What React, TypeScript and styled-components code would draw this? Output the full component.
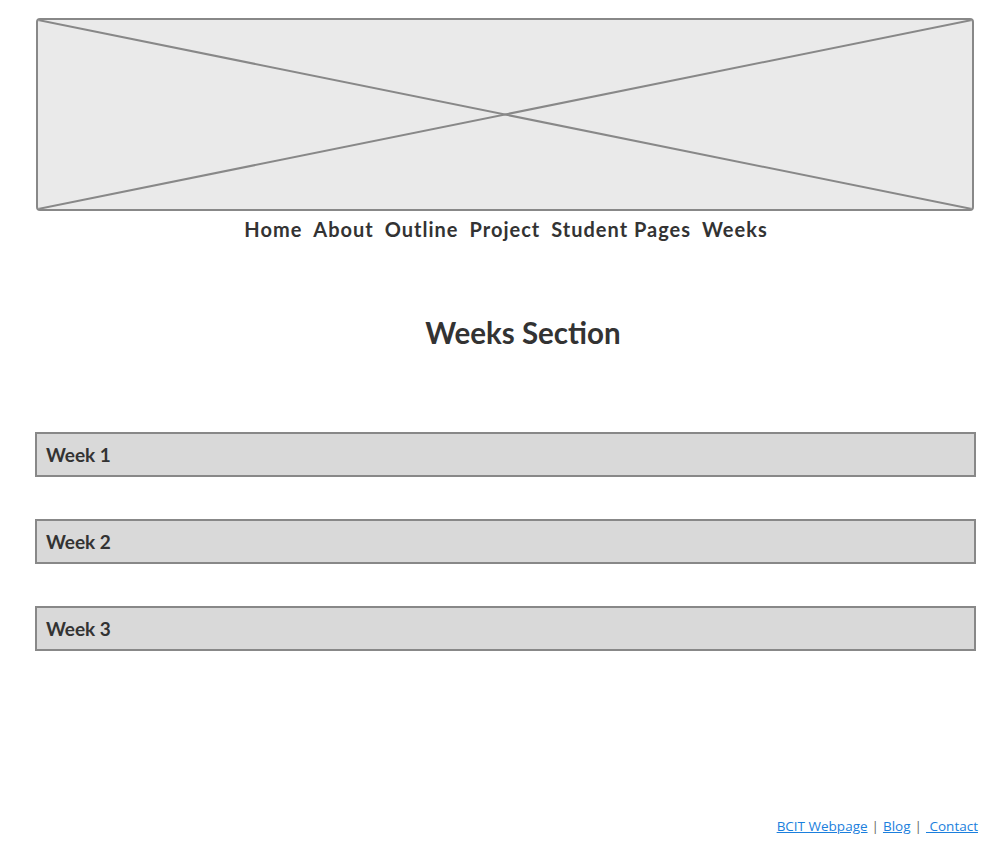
import React from "react";
import styled, { createGlobalStyle } from "styled-components";

const Global = createGlobalStyle`
  html, body { margin: 0; padding: 0; background: #fff; }
  body { font-family: "Lato", "Open Sans", sans-serif; color: #333; }
`;

const Page = styled.div`
  width: 1000px;
  height: 863px;
  display: flex;
  flex-direction: column;
  box-sizing: border-box;
`;

const Banner = styled.div`
  margin: 18px 0 0 36px;
  width: 938px;
  height: 193px;
  box-sizing: border-box;
  border: 2px solid #888;
  border-radius: 4px;
  background: #eaeaea;
  overflow: hidden;
  svg { display: block; width: 100%; height: 100%; }
`;

const Nav = styled.nav`
  display: flex;
  justify-content: center;
  gap: 11px;
  margin: 5px 0 0 12px;
  font-weight: 700;
  font-size: 20px;
  letter-spacing: 1px;
  line-height: 26px;
  color: #333;
`;

const NavItem = styled.span``;

const Heading = styled.h1`
  margin: 71px 0 0 46px;
  text-align: center;
  font-size: 29.5px;
  font-weight: 700;
  line-height: 40px;
  color: #333;
`;

const WeekList = styled.div`
  display: flex;
  flex-direction: column;
  gap: 42px;
  margin: 79px 0 0 35px;
  width: 941px;
`;

const WeekBar = styled.div`
  box-sizing: border-box;
  height: 45px;
  border: 2px solid #888;
  background: #d9d9d9;
  display: flex;
  align-items: center;
  padding-left: 9px;
  font-size: 19px;
  font-weight: 700;
  color: #333;
`;

const Footer = styled.footer`
  margin-top: auto;
  margin-bottom: 28px;
  align-self: flex-end;
  margin-right: 22px;
  display: flex;
  align-items: center;
  gap: 4px;
  font-size: 13.5px;
  font-family: "Open Sans", "Lato", sans-serif;
`;

const FootLink = styled.a`
  color: #1b7fdd;
  text-decoration: underline;
`;

const Sep = styled.span`
  color: #666;
`;

export default function App() {
  return (
    <Page>
      <Global />
      <Banner>
        <svg viewBox="0 0 934 189" preserveAspectRatio="none">
          <line x1="0" y1="0" x2="934" y2="189" stroke="#888" strokeWidth="2" />
          <line x1="934" y1="0" x2="0" y2="189" stroke="#888" strokeWidth="2" />
        </svg>
      </Banner>
      <Nav>
        <NavItem>Home</NavItem>
        <NavItem>About</NavItem>
        <NavItem>Outline</NavItem>
        <NavItem>Project</NavItem>
        <NavItem>Student Pages</NavItem>
        <NavItem>Weeks</NavItem>
      </Nav>
      <Heading>Weeks Section</Heading>
      <WeekList>
        <WeekBar>Week 1</WeekBar>
        <WeekBar>Week 2</WeekBar>
        <WeekBar>Week 3</WeekBar>
      </WeekList>
      <Footer>
        <FootLink href="#">BCIT Webpage</FootLink>
        <Sep>|</Sep>
        <FootLink href="#">Blog</FootLink>
        <Sep>|</Sep>
        <FootLink href="#">&nbsp;Contact</FootLink>
      </Footer>
    </Page>
  );
}
